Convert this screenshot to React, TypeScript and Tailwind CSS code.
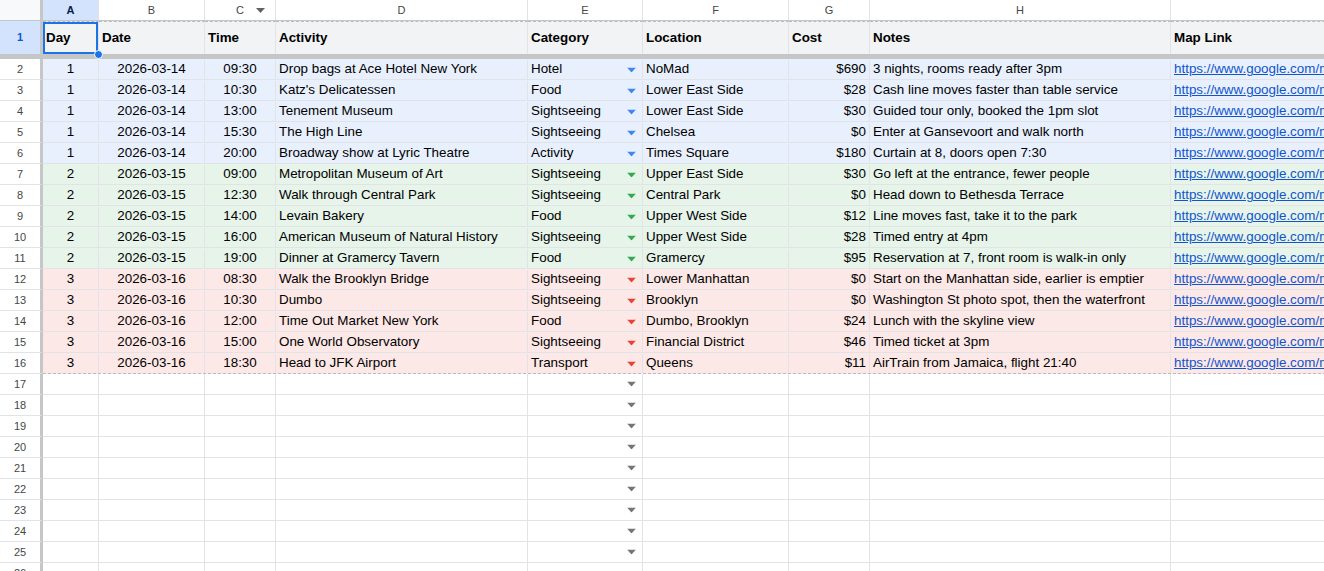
import React from "react";

type Row = [number, string, string, string, string, string, string, string];

const COLS = [
  { key: "A", w: "w-[56px]" },
  { key: "B", w: "w-[106px]" },
  { key: "C", w: "w-[71px]" },
  { key: "D", w: "w-[252px]" },
  { key: "E", w: "w-[115px]" },
  { key: "F", w: "w-[146px]" },
  { key: "G", w: "w-[81px]" },
  { key: "H", w: "w-[301px]" },
  { key: "", w: "w-[220px]" },
];

const HEADERS = ["Day", "Date", "Time", "Activity", "Category", "Location", "Cost", "Notes", "Map Link"];

const ROWS: Row[] = [
  [1, "2026-03-14", "09:30", "Drop bags at Ace Hotel New York", "Hotel", "NoMad", "$690", "3 nights, rooms ready after 3pm"],
  [1, "2026-03-14", "10:30", "Katz's Delicatessen", "Food", "Lower East Side", "$28", "Cash line moves faster than table service"],
  [1, "2026-03-14", "13:00", "Tenement Museum", "Sightseeing", "Lower East Side", "$30", "Guided tour only, booked the 1pm slot"],
  [1, "2026-03-14", "15:30", "The High Line", "Sightseeing", "Chelsea", "$0", "Enter at Gansevoort and walk north"],
  [1, "2026-03-14", "20:00", "Broadway show at Lyric Theatre", "Activity", "Times Square", "$180", "Curtain at 8, doors open 7:30"],
  [2, "2026-03-15", "09:00", "Metropolitan Museum of Art", "Sightseeing", "Upper East Side", "$30", "Go left at the entrance, fewer people"],
  [2, "2026-03-15", "12:30", "Walk through Central Park", "Sightseeing", "Central Park", "$0", "Head down to Bethesda Terrace"],
  [2, "2026-03-15", "14:00", "Levain Bakery", "Food", "Upper West Side", "$12", "Line moves fast, take it to the park"],
  [2, "2026-03-15", "16:00", "American Museum of Natural History", "Sightseeing", "Upper West Side", "$28", "Timed entry at 4pm"],
  [2, "2026-03-15", "19:00", "Dinner at Gramercy Tavern", "Food", "Gramercy", "$95", "Reservation at 7, front room is walk-in only"],
  [3, "2026-03-16", "08:30", "Walk the Brooklyn Bridge", "Sightseeing", "Lower Manhattan", "$0", "Start on the Manhattan side, earlier is emptier"],
  [3, "2026-03-16", "10:30", "Dumbo", "Sightseeing", "Brooklyn", "$0", "Washington St photo spot, then the waterfront"],
  [3, "2026-03-16", "12:00", "Time Out Market New York", "Food", "Dumbo, Brooklyn", "$24", "Lunch with the skyline view"],
  [3, "2026-03-16", "15:00", "One World Observatory", "Sightseeing", "Financial District", "$46", "Timed ticket at 3pm"],
  [3, "2026-03-16", "18:30", "Head to JFK Airport", "Transport", "Queens", "$11", "AirTrain from Jamaica, flight 21:40"],
];

const DAY_STYLE: Record<number, { bg: string; arrow: string }> = {
  1: { bg: "bg-[#e8f0fe]", arrow: "#4285f4" },
  2: { bg: "bg-[#e6f4ea]", arrow: "#34a853" },
  3: { bg: "bg-[#fce8e6]", arrow: "#ea4335" },
};

function Arrow({ color }: { color: string }) {
  return (
    <svg width="9" height="5" viewBox="0 0 9 5" className="absolute right-[6px] top-1/2 -translate-y-1/2">
      <polygon points="0,0 9,0 4.5,5" fill={color} />
    </svg>
  );
}

const cell =
  "relative shrink-0 h-full border-r border-[#e1e3e6] overflow-hidden whitespace-nowrap flex items-center px-[3px]";

export default function App() {
  return (
    <div
      className="w-[1324px] h-[571px] overflow-hidden bg-white text-[13.4px] text-black"
      style={{ fontFamily: '"Liberation Sans", Arial, sans-serif' }}
    >
      {/* column letters */}
      <div className="flex h-[21px] border-b border-[#c4c7c5] bg-white">
        <div className="w-[43px] shrink-0 h-full border-r-[3px] border-[#c4c7c5] bg-[#f8f9fa]" />
        {COLS.map((c, i) => (
          <div
            key={i}
            className={`${c.w} relative shrink-0 h-full border-r border-[#e1e3e6] flex items-center justify-center text-[11px] ${
              i === 0 ? "bg-[#d3e3fd] font-bold text-[#041e49]" : "text-[#444746]"
            }`}
          >
            {c.key}
            {c.key === "C" && (
              <svg width="9" height="5" viewBox="0 0 9 5" className="absolute right-[10px] top-[8px]">
                <polygon points="0,0 9,0 4.5,5" fill="#5f6368" />
              </svg>
            )}
          </div>
        ))}
      </div>

      {/* header row 1 */}
      <div className="flex h-[33px]">
        <div className="w-[43px] shrink-0 h-full border-r-[3px] border-[#c4c7c5] bg-[#d3e3fd] flex items-center justify-center text-[11px] font-bold text-[#0b57d0]">
          1
        </div>
        {COLS.map((c, i) => (
          <div
            key={i}
            className={`${c.w} ${cell} bg-[#f1f3f4] font-bold border-t border-t-[#b9bcbf] border-dashed`}
            style={{ borderRightStyle: "solid" }}
          >
            {HEADERS[i]}
            {i === 0 && <div className="absolute inset-0 border-2 border-[#1a73e8]" />}
          </div>
        ))}
      </div>
      <div className="relative h-[5px] bg-[#c4c7c5]">
        <div className="absolute left-[94px] top-[-4px] w-[9px] h-[9px] rounded-full bg-[#1a73e8] border border-white z-10" />
      </div>

      {/* data rows */}
      {ROWS.map((r, idx) => {
        const s = DAY_STYLE[r[0]];
        const last = idx === ROWS.length - 1;
        return (
          <div key={idx} className="flex h-[21px]">
            <div className="w-[43px] shrink-0 h-full border-r-[3px] border-b border-[#c4c7c5] border-b-[#e1e3e6] bg-white flex items-center justify-center pt-[1px] text-[11px] text-[#444746]">
              {idx + 2}
            </div>
            <div
              className={`flex h-full pt-[1px] ${s.bg} border-b ${last ? "border-dashed border-[#b9bcbf]" : "border-[#e1e3e6]"}`}
            >
              <div className={`w-[56px] ${cell} justify-center`}>{r[0]}</div>
              <div className={`w-[106px] ${cell} justify-center`}>{r[1]}</div>
              <div className={`w-[71px] ${cell} justify-center`}>{r[2]}</div>
              <div className={`w-[252px] ${cell}`}>{r[3]}</div>
              <div className={`w-[115px] ${cell}`}>
                {r[4]}
                <Arrow color={s.arrow} />
              </div>
              <div className={`w-[146px] ${cell}`}>{r[5]}</div>
              <div className={`w-[81px] ${cell} justify-end`}>{r[6]}</div>
              <div className={`w-[301px] ${cell}`}>{r[7]}</div>
              <div className={`w-[220px] ${cell}`}>
                <span className="text-[#1155cc] underline">https://www.google.com/maps</span>
              </div>
            </div>
          </div>
        );
      })}

      {/* empty rows */}
      {Array.from({ length: 10 }).map((_, k) => (
        <div key={k} className="flex h-[21px]">
          <div className="w-[43px] shrink-0 h-full border-r-[3px] border-b border-[#c4c7c5] border-b-[#e1e3e6] bg-white flex items-center justify-center text-[11px] text-[#444746]">
            {k + 17}
          </div>
          {COLS.map((c, i) => (
            <div key={i} className={`${c.w} ${cell} border-b`}>
              {i === 4 && k < 9 && <Arrow color="#757575" />}
            </div>
          ))}
        </div>
      ))}
    </div>
  );
}
